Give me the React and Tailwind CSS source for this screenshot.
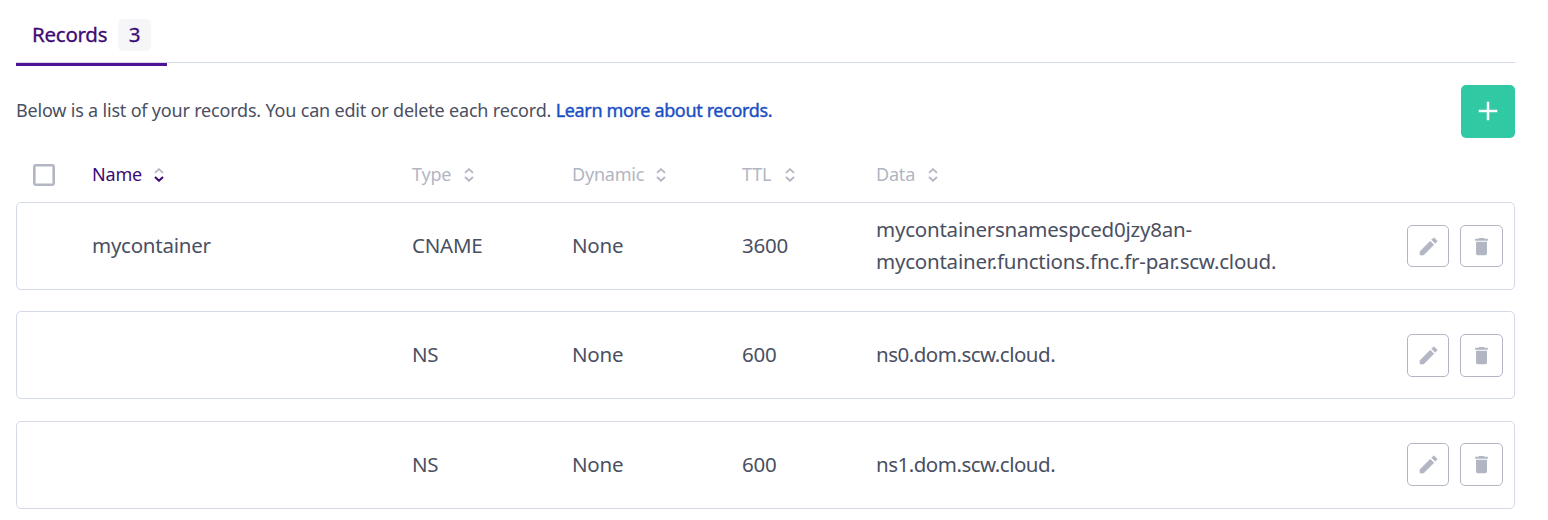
const GRID = "grid grid-cols-[75px_320px_160px_170px_134px_1fr_auto]";

const COLUMNS = [
  { label: "Name", gap: "gap-[12px]", active: true },
  { label: "Type", gap: "gap-[13px]" },
  { label: "Dynamic", gap: "gap-[12px]" },
  { label: "TTL", gap: "gap-[14px]" },
  { label: "Data", gap: "gap-[13px]" },
];

const RECORDS = [
  {
    name: "mycontainer",
    type: "CNAME",
    ttl: "3600",
    data: ["mycontainersnamespced0jzy8an-", "mycontainer.functions.fnc.fr-par.scw.cloud."],
    tracking: "tracking-[-0.22px]",
    space: "mb-[21px]",
    button: "h-[42px]",
  },
  {
    name: "",
    type: "NS",
    ttl: "600",
    data: ["ns0.dom.scw.cloud."],
    tracking: "tracking-[-0.5px]",
    space: "mb-[22px]",
    button: "h-[43px]",
  },
  {
    name: "",
    type: "NS",
    ttl: "600",
    data: ["ns1.dom.scw.cloud."],
    tracking: "tracking-[-0.5px]",
    space: "",
    button: "h-[43px] mb-px",
  },
];

function SortIcon({ active }) {
  return (
    <svg width="10" height="14" viewBox="0 0 10 14" fill="none" strokeWidth="1.8" className="mt-0.5">
      <path d="M1 4.9 5 1.2 9 4.9" stroke="#b2b6c3" />
      <path d="M1 9 5 12.7 9 9" stroke={active ? "#3d0a75" : "#b2b6c3"} strokeWidth={active ? 2.1 : 1.8} />
    </svg>
  );
}

function PencilIcon() {
  return (
    <svg width="23" height="23" viewBox="0 0 24 24" fill="#b2b6c3" stroke="#b2b6c3" strokeWidth="0.7" strokeLinejoin="round">
      <path d="M3.2 17.2V20.8h3.7L17.5 10.2l-3.7-3.7L3.2 17.2zM20.6 7.04a1 1 0 0 0 0-1.41l-2.24-2.24a1 1 0 0 0-1.41 0l-1.6 1.6 3.65 3.65 1.6-1.6z" />
    </svg>
  );
}

function TrashIcon() {
  return (
    <svg width="23" height="23" viewBox="0 0 24 24" fill="#b2b6c3">
      <path d="M6.3 19.2c0 1.1.8 1.8 1.9 1.8h7.6c1.1 0 1.9-.7 1.9-1.8V7H6.3v12.2zM18.6 4h-3.3l-1-1H9.7l-1 1H5.4v2h13.2V4z" />
    </svg>
  );
}

export default function App() {
  return (
    <main className="h-[520px] w-[1548px] overflow-hidden bg-white pl-4 pr-[33px] font-['Noto_Sans',sans-serif] text-[#4a4f62]">
      <nav className="flex h-[63px] border-b border-[#d4dae7]">
        <button className="flex h-[66px] w-[151px] shrink-0 items-start border-b-[3px] border-[#4f1496] pl-4 pt-[19px] text-[#3d0a75]">
          <span className="-mt-px w-[86px] text-left text-[20.5px] leading-8 tracking-[-0.25px] [-webkit-text-stroke:0.3px_#3d0a75]">Records</span>
          <span className="h-8 w-[33px] rounded-[5px] bg-[#f6f6f9] text-center text-[20.5px] leading-[30px] [-webkit-text-stroke:0.3px_#3d0a75]">3</span>
        </button>
      </nav>

      <section className="mt-[22px] flex h-[53px] items-center justify-between">
        <p className="mb-[3px] text-[18px] leading-7 tracking-[-0.19px]">
          Below is a list of your records. You can edit or delete each record.{" "}
          <a className="tracking-[-0.35px] text-[#1b4fc4] [-webkit-text-stroke:0.4px_#1b4fc4]">Learn more about records.</a>
        </p>
        <button aria-label="Add record" className="flex h-[53px] w-[54px] items-center justify-center rounded-[5px] bg-[#30c9a4] pb-px">
          <svg width="20" height="20" viewBox="0 0 20 20" stroke="#fff" strokeWidth="2.5">
            <path d="M10 .7v18.6M.7 10h18.6" />
          </svg>
        </button>
      </section>

      <div className={`${GRID} h-16 items-center border-x border-transparent pt-2 text-[18px] leading-7 tracking-[-0.2px] text-[#b2b6c3]`}>
        <span className="mt-px ml-4 size-[22px] rounded-[3px] border-2 border-[#b2b6c3] shadow-[inset_0_0_0_0.6px_#b2b6c3]" />
        {COLUMNS.map((c) => (
          <div key={c.label} className={`flex items-center ${c.gap} ${c.active ? "text-[#3d0a75]" : ""}`}>
            <span>{c.label}</span>
            <SortIcon active={c.active} />
          </div>
        ))}
      </div>

      {RECORDS.map((r) => (
        <article key={r.data[0]} className={`${GRID} ${r.space} h-[88px] items-center rounded-[5px] border border-[#d4dae7] pr-[11px] text-[20.5px] leading-8 tracking-[-0.25px]`}>
          <span />
          <span className="pb-0.5">{r.name}</span>
          <span className="pb-0.5">{r.type}</span>
          <span className="pb-0.5">None</span>
          <span className="pb-0.5">{r.ttl}</span>
          <div className={`pb-0.5 ${r.tracking}`}>
            {r.data.map((line) => (
              <div key={line}>{line}</div>
            ))}
          </div>
          <div className="flex gap-[11px]">
            <button aria-label="Edit record" className={`${r.button} flex w-[42px] items-center justify-center rounded-[5px] border border-[#b2b6c3]`}>
              <PencilIcon />
            </button>
            <button aria-label="Delete record" className={`${r.button} flex w-[43px] items-center justify-center rounded-[5px] border border-[#b2b6c3]`}>
              <TrashIcon />
            </button>
          </div>
        </article>
      ))}
    </main>
  );
}
